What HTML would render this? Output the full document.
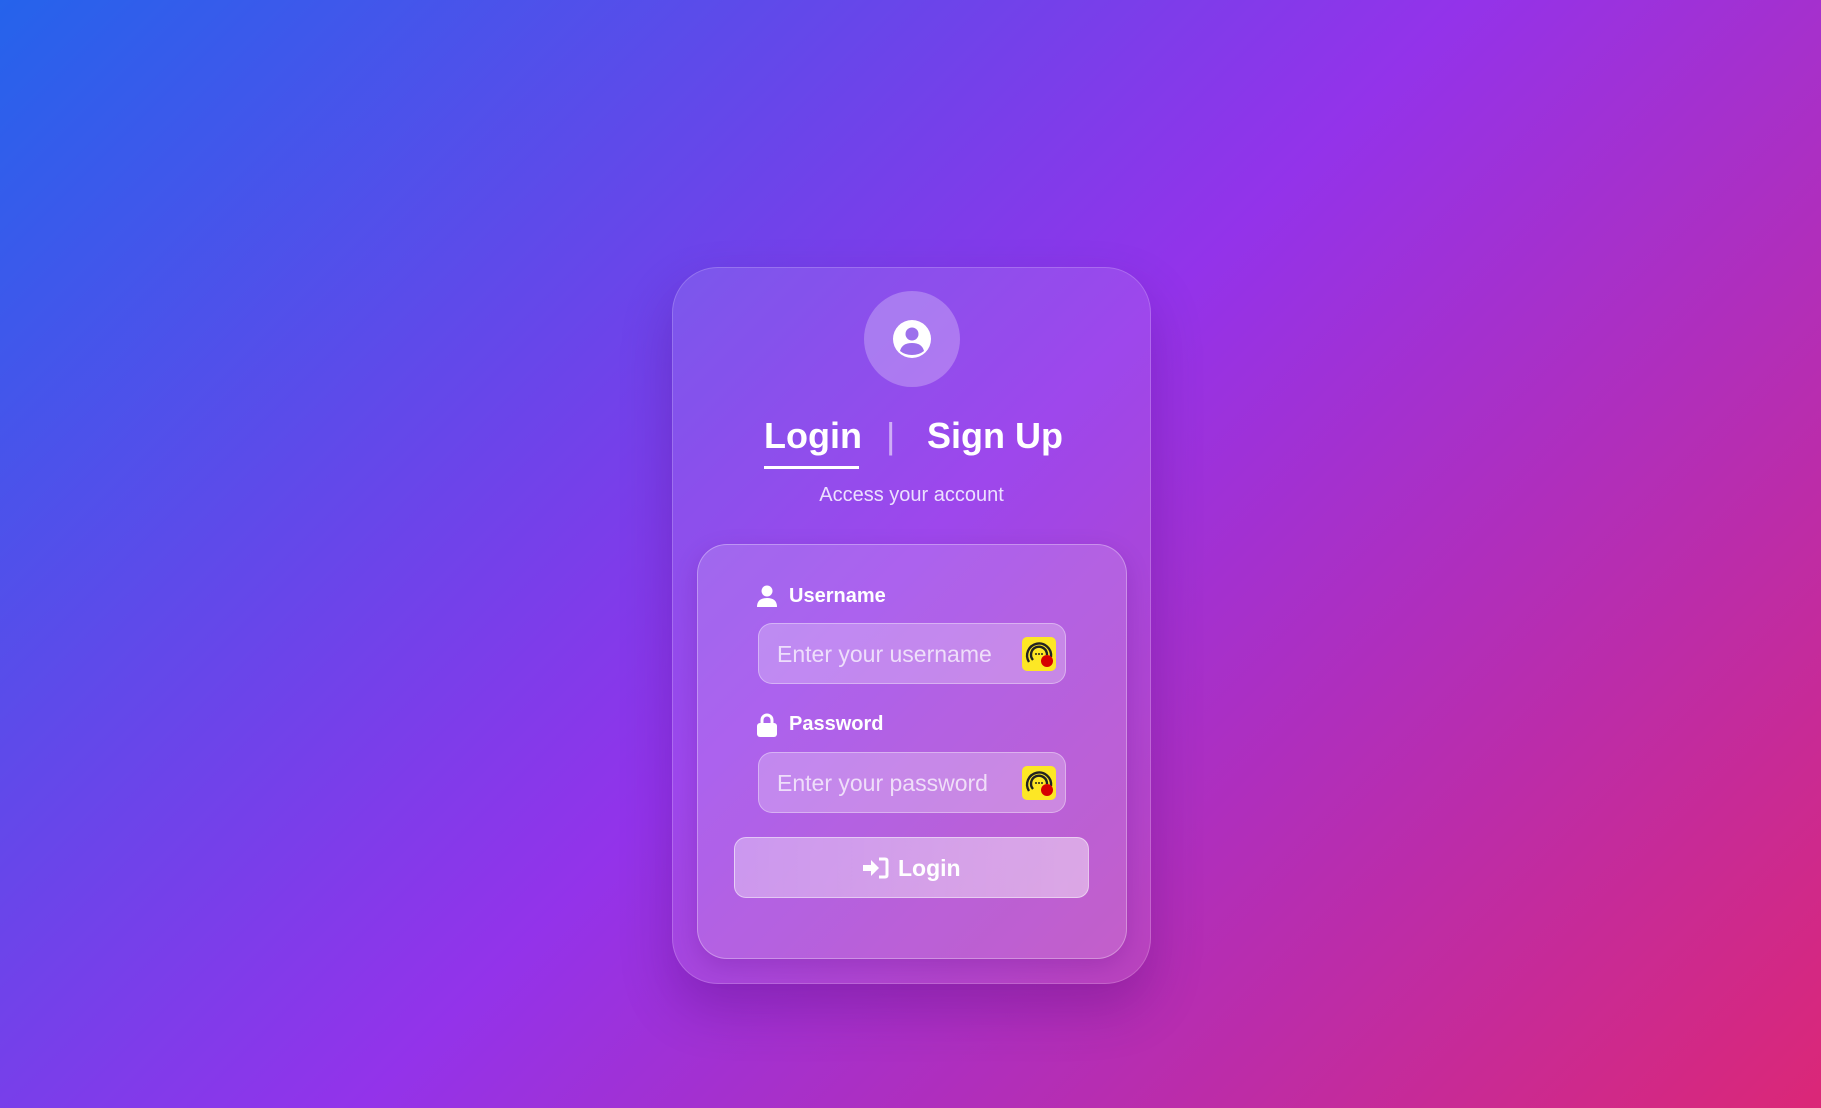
<!DOCTYPE html>
<html><head><meta charset="utf-8"><style>
html,body{margin:0;padding:0;width:1821px;height:1108px;overflow:hidden}
body{background:linear-gradient(135deg,#2563eb 0%,#9333ea 50%,#db2777 100%);font-family:"Liberation Sans",sans-serif;position:relative}
.card{position:absolute;left:672px;top:267px;width:479px;height:717px;box-sizing:border-box;border-radius:46px;background:rgba(255,255,255,0.10);border:1px solid rgba(255,255,255,0.18);box-shadow:0 25px 50px rgba(60,0,100,0.25)}
.av{position:absolute;left:864px;top:291px;width:96px;height:96px;border-radius:50%;background:rgba(255,255,255,0.25)}
.t{position:absolute;color:#fff;font-weight:bold;font-size:36px;top:415px}
.ul{position:absolute;left:764px;top:466px;width:95px;height:3px;background:#fff}
.sub{position:absolute;left:672px;width:479px;text-align:center;top:484px;color:#ece0ff;font-size:20px}
.panel{position:absolute;left:697px;top:544px;width:430px;height:415px;box-sizing:border-box;border-radius:30px;background:rgba(255,255,255,0.15);border:1px solid rgba(255,255,255,0.3);box-shadow:0 8px 24px rgba(80,0,120,0.2)}
.lbl{position:absolute;left:789px;color:#fff;font-weight:bold;font-size:20px}
.inp{position:absolute;left:758px;width:308px;height:61px;box-sizing:border-box;border-radius:14px;background:rgba(255,255,255,0.25);border:1px solid rgba(255,255,255,0.35)}
.ph{position:absolute;left:18px;top:17px;color:rgba(255,255,255,0.72);font-size:23px}
.ic{position:absolute;left:263px;top:13px;width:34px;height:34px}
.btn{position:absolute;left:734px;top:837px;width:355px;height:61px;box-sizing:border-box;border-radius:12px;background:linear-gradient(90deg,rgba(255,255,255,0.35),rgba(255,255,255,0.45));border:1px solid rgba(255,255,255,0.45);color:#fff;font-weight:bold;font-size:23px}
</style></head><body>
<div class="card"></div>
<div class="av"><svg width="96" height="96" viewBox="0 0 96 96"><circle cx="48" cy="48" r="19" fill="#fff"/><circle cx="48" cy="43" r="6.5" fill="#9d70ec"/><path d="M36 60 Q38 52 48 52 Q58 52 60 60 Q55 64 48 64 Q41 64 36 60Z" fill="#9d70ec"/></svg></div>
<div class="t" style="left:764px">Login</div>
<div class="t" style="left:886px;color:rgba(255,255,255,0.55);font-weight:normal">|</div>
<div class="t" style="left:927px">Sign Up</div>
<div class="ul"></div>
<div class="sub">Access your account</div>
<div class="panel"></div>
<svg style="position:absolute;left:757px;top:585px" width="20" height="24" viewBox="0 0 20 24"><circle cx="10" cy="6" r="5.5" fill="#fff"/><path d="M0 22 Q0 13 10 13 Q20 13 20 22 Z" fill="#fff"/></svg>
<div class="lbl" style="top:585px">Username</div>
<div class="inp" style="top:623px"><div class="ph">Enter your username</div>
<svg class="ic" viewBox="0 0 34 34"><rect width="34" height="34" rx="5" fill="#fde725"/><path d="M7 25 A12 12 0 1 1 29 20" stroke="#222" stroke-width="2.4" fill="none"/><path d="M11 23 A8 8 0 1 1 25 18" stroke="#222" stroke-width="2.4" fill="none"/><circle cx="14" cy="17" r="1" fill="#222"/><circle cx="17" cy="17" r="1" fill="#222"/><circle cx="20" cy="17" r="1" fill="#222"/><circle cx="25" cy="24" r="6" fill="#d60000"/></svg></div>
<svg style="position:absolute;left:757px;top:713px" width="20" height="24" viewBox="0 0 20 24"><path d="M5 11 V7 A5 5 0 0 1 15 7 V11" stroke="#fff" stroke-width="3" fill="none"/><rect x="0" y="10" width="20" height="14" rx="3" fill="#fff"/></svg>
<div class="lbl" style="top:713px">Password</div>
<div class="inp" style="top:752px"><div class="ph">Enter your password</div>
<svg class="ic" viewBox="0 0 34 34"><rect width="34" height="34" rx="5" fill="#fde725"/><path d="M7 25 A12 12 0 1 1 29 20" stroke="#222" stroke-width="2.4" fill="none"/><path d="M11 23 A8 8 0 1 1 25 18" stroke="#222" stroke-width="2.4" fill="none"/><circle cx="14" cy="17" r="1" fill="#222"/><circle cx="17" cy="17" r="1" fill="#222"/><circle cx="20" cy="17" r="1" fill="#222"/><circle cx="25" cy="24" r="6" fill="#d60000"/></svg></div>
<div class="btn"><svg style="position:absolute;left:128px;top:19px" width="26" height="22" viewBox="0 0 26 22"><path d="M0 8 H8 V3 L16 11 L8 19 V14 H0 Z" fill="#fff"/><path d="M16 2 H22 Q24 2 24 4 V18 Q24 20 22 20 H16" stroke="#fff" stroke-width="3" fill="none"/></svg><span style="position:absolute;left:163px;top:17px">Login</span></div>
</body></html>
